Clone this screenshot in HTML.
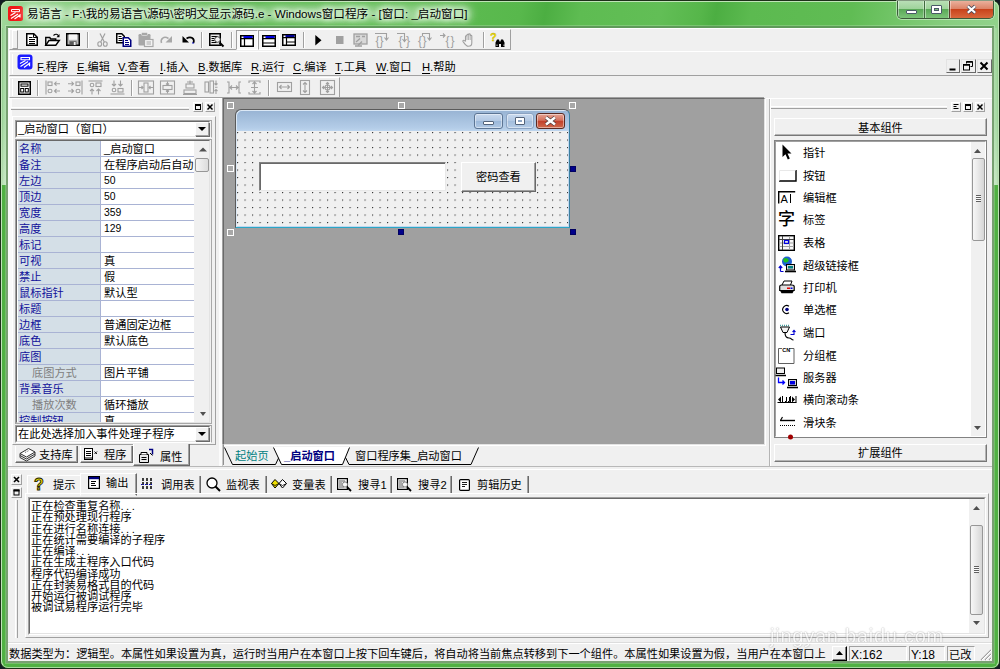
<!DOCTYPE html>
<html lang="zh-CN">
<head>
<meta charset="utf-8">
<title>易语言</title>
<style>
*{box-sizing:border-box;margin:0;padding:0}
html,body{width:1000px;height:669px;overflow:hidden;background:#141c24}
body{font-family:"Liberation Sans","Noto Sans CJK SC",sans-serif;font-size:11.2px;color:#000;position:relative;line-height:12px}
div,span,svg{position:absolute}
svg{overflow:visible}
.t{white-space:nowrap;line-height:12px;font-size:11.2px;height:12px}
.t u{text-decoration:underline;text-underline-offset:2px}
#frame{left:0;top:0;width:1000px;height:669px;border-radius:8px;border:1px solid #1c3018;background:#50b143}
#frame2{left:1px;top:1px;width:998px;height:667px;border-radius:7px;border:1px solid #c0e4b8;border-bottom-color:#a4dc9c}
#tbar{left:1px;top:1px;width:998px;height:27px;border-radius:7px 7px 0 0;background:linear-gradient(100deg,#a4da9e 0,#96d490 2%,#7cc872 8%,#62be56 15%,#58b84c 22%,#4eb044 24%,#5cba50 27%,#60bd54 40%,#58b84c 52%,#4cae42 54.5%,#5ebc52 58%,#62be56 66%,#56b64a 70%,#4cae42 71.5%,#5cba50 75%,#60bc54 85%,#74c66a 90%,#88ce80 95%,#92d28c 100%)}
#lstrip{left:1px;top:28px;width:7px;height:157px;background:linear-gradient(90deg,rgba(0,70,0,.1) 0,rgba(255,255,255,.22) 45%,rgba(255,255,255,0) 70%,rgba(0,70,0,.22) 100%),linear-gradient(180deg,#8fd08a 0,#9ad596 60%,#b8e2b4 100%)}
#rstrip{left:992px;top:28px;width:7px;height:157px;background:linear-gradient(90deg,rgba(0,70,0,.22) 0,rgba(255,255,255,0) 30%,rgba(255,255,255,.22) 55%,rgba(0,70,0,.1) 100%),linear-gradient(180deg,#8fd08a 0,#9ad596 60%,#b8e2b4 100%)}
#client{left:8px;top:28px;width:984px;height:633px;background:#f0f0f0}
#cedge{left:6px;top:26px;width:988px;height:637px;border:2px solid #78a072;border-top-color:#5f9a5a;box-shadow:0 0 0 1px rgba(255,255,255,.2)}
#title{left:27px;top:5px;font-size:11.62px;line-height:17px;height:17px;white-space:nowrap;color:#000;text-shadow:0 0 5px #e4f7e2,0 0 5px #e4f7e2,0 0 8px #e4f7e2,0 0 8px #e4f7e2}
.sunk{border:1px solid;border-color:#a0a0a0 #fff #fff #a0a0a0}
.sunk2{border:1px solid;border-color:#696969 #e3e3e3 #e3e3e3 #696969}
.raise{border:1px solid;border-color:#fff #a0a0a0 #a0a0a0 #fff}
.raise2{border:1px solid;border-color:#e3e3e3 #696969 #696969 #e3e3e3}
.hl{height:2px;border-top:1px solid #a0a0a0;border-bottom:1px solid #fff}
.vl{width:2px;border-left:1px solid #a0a0a0;border-right:1px solid #fff}
.pn{left:1px;width:83px;height:16px;background:#d4dfe7;border-bottom:1px solid #a9b3d4;border-right:1px solid #a9b3d4;color:#10109a;padding:2px 0 0 1px;white-space:nowrap;overflow:hidden;line-height:12px}
.pn.g{color:#808080;padding-left:14px}
.pv{left:84px;width:94px;height:16px;background:#fff;border-bottom:1px solid #a9b3d4;padding:2px 0 0 3px;white-space:nowrap;overflow:hidden;line-height:12px}
.pv.n{font-size:10.4px}
</style>
</head>
<body>
<!-- frame -->
<div id="frame"></div><div id="tbar"></div><div id="lstrip"></div><div id="rstrip"></div><div id="frame2"></div>
<svg style="left:8px;top:6px" width="15" height="15" viewBox="0 0 15 15"><rect x="0" y="0" width="15" height="15" rx="2.5" fill="#f01818"/><path d="M3.5 3.5h8v2.2h-8z" fill="none" stroke="#fff" stroke-width="1"/><path d="M2.5 9.5 7.5 6.5M3 12.5l7-4.5M6.5 13l5.5-4v2.5" fill="none" stroke="#fff" stroke-width="1.2"/></svg>
<div id="glow" style="left:22px;top:6px;width:450px;height:15px;border-radius:8px;background:rgba(255,255,255,.38);filter:blur(5px)"></div>
<div id="title">易语言 - F:\我的易语言\源码\密明文显示源码.e - Windows窗口程序 - [窗口: _启动窗口]</div>
<div id="cedge"></div><div id="client"></div>
<div style="left:897px;top:1px;width:97px;height:18px;border-radius:0 0 5px 5px;border:1px solid #3c5a3a;border-top:0;background:#6ab567;overflow:hidden;box-shadow:0 0 0 1px rgba(220,245,218,.55)">
<div style="left:0;top:0;width:26px;height:17px;background:linear-gradient(180deg,#b9dfb6 0,#9fd39b 45%,#5aa957 50%,#7cc479 100%);box-shadow:inset 1px 0 0 rgba(255,255,255,.45),inset -1px 0 0 rgba(255,255,255,.35)"></div>
<div style="left:26px;top:0;width:1px;height:17px;background:#3f6b3d"></div>
<div style="left:27px;top:0;width:24px;height:17px;background:linear-gradient(180deg,#b9dfb6 0,#9fd39b 45%,#5aa957 50%,#7cc479 100%);box-shadow:inset 1px 0 0 rgba(255,255,255,.45),inset -1px 0 0 rgba(255,255,255,.35)"></div>
<div style="left:51px;top:0;width:1px;height:17px;background:#5a3a30"></div>
<div style="left:52px;top:0;width:44px;height:17px;background:linear-gradient(180deg,#eab09c 0,#dc8468 45%,#c8431c 50%,#d8683c 100%);box-shadow:inset 1px 0 0 rgba(255,255,255,.4),inset -1px 0 0 rgba(255,255,255,.3)"></div>
</div>
<div style="left:906px;top:10px;width:11px;height:4px;background:#fff;border:1px solid #4a5a68;border-radius:1px"></div>
<div style="left:931px;top:5px;width:11px;height:9px;background:#fff;border:1px solid #4a5a68;border-radius:1px"></div>
<div style="left:934px;top:8px;width:5px;height:3px;background:#7fbf7c;border:1px solid #4a5a68"></div>
<svg style="left:966px;top:5px" width="11" height="9" viewBox="0 0 11 9"><path d="M1.800 1.200 9.200 7.800M9.200 1.200 1.800 7.800" stroke="#4a4a58" stroke-width="3.600"/><path d="M1.800 1.200 9.200 7.800M9.200 1.200 1.800 7.800" stroke="#fff" stroke-width="2.200"/></svg>

<!-- toolbars -->
<div style="left:8px;top:28px;width:984px;height:1px;background:#fff"></div>
<div class="raise" style="left:9px;top:29px;width:502px;height:21px"></div>
<div style="left:12px;top:30px;width:6px;height:19px;border:1px solid;border-color:#fff #a0a0a0 #a0a0a0 #fff"></div>
<svg style="left:26px;top:33px" width="12" height="13" viewBox="0 0 12 13"><path d="M.75.75h7l3.5 3.5v8h-10.5z" fill="#fff" stroke="#000" stroke-width="1.5"/><path d="M7.5 1v3.5H11" fill="none" stroke="#000"/><path d="M3 4.5h3.5M3 6.5h6M3 8.5h6M3 10.5h6" stroke="#000" stroke-width="1"/></svg>
<svg style="left:45px;top:33px" width="15" height="13" viewBox="0 0 15 13"><path d="M.75 12V4.5h4l1 1.5h5v2" fill="none" stroke="#000" stroke-width="1.4"/><path d="M.8 12.2 4 7.5h10.3l-3.5 4.7z" fill="#fff" stroke="#000" stroke-width="1.4"/><path d="M8.5 2.5c2-2 4.500-1.500 5 .8" fill="none" stroke="#000" stroke-width="1.100"/><path d="M14.500 1v3.300h-3z" fill="#000"/></svg>
<svg style="left:66px;top:33px" width="14" height="13" viewBox="0 0 14 13"><rect x=".75" y=".75" width="12.500" height="11.500" fill="#b4b4b4" stroke="#000" stroke-width="1.500"/><rect x="3" y="1.500" width="8" height="5.200" fill="#fff"/><path d="M3 3h8M3 5h8" stroke="#e0e0e0" stroke-width=".6"/><rect x="3.500" y="8.300" width="7" height="4" fill="#585858"/><rect x="7.800" y="9" width="1.800" height="3" fill="#f0f0f0"/></svg>
<div class="vl" style="left:87px;top:32px;height:16px"></div>
<svg style="left:97px;top:33px" width="11" height="14" viewBox="0 0 11 14"><path d="M3 .5 7.300 9M8 .5 3.700 9" stroke="#a0a0a0" stroke-width="1.200" fill="none"/><ellipse cx="2.700" cy="11" rx="1.900" ry="2.300" fill="none" stroke="#a0a0a0" stroke-width="1.100"/><ellipse cx="8.300" cy="11" rx="1.900" ry="2.300" fill="none" stroke="#a0a0a0" stroke-width="1.100"/></svg>
<svg style="left:116px;top:33px" width="16" height="14" viewBox="0 0 16 14"><path d="M.75.75h5l2.500 2.500v6.500h-7.500z" fill="#fff" stroke="#000" stroke-width="1.500"/><path d="M2.500 3.500h3M2.500 5.500h4M2.500 7.500h4" stroke="#000"/><path d="M7.250 4.750h5l2.500 2.500v6h-7.500z" fill="#fff" stroke="#000080" stroke-width="1.500"/><path d="M9 7.500h3M9 9.500h4M9 11.500h4" stroke="#000080"/></svg>
<svg style="left:138px;top:32px" width="16" height="15" viewBox="0 0 16 15"><rect x=".5" y="2" width="12" height="11.500" rx="1.200" fill="#a8a8a8"/><rect x="3.500" y=".5" width="6" height="3" rx="1" fill="#a8a8a8" stroke="#f0f0f0" stroke-width=".6"/><rect x="6.500" y="7.500" width="8.500" height="7" fill="#f4f4f4" stroke="#a8a8a8" stroke-width="1.200"/><path d="M8.500 10h4.500M8.500 12h4.500" stroke="#a8a8a8"/></svg>
<svg style="left:160px;top:35px" width="13" height="9" viewBox="0 0 13 9"><path d="M1.500 8C0 3.500 4 .8 8.500 3.500" fill="none" stroke="#a8a8a8" stroke-width="1.500"/><path d="M12 1v6.500H5.500z" fill="#a8a8a8"/></svg>
<svg style="left:181px;top:35px" width="14" height="9" viewBox="0 0 14 9"><path d="M12.500 8C14 3.500 10 .8 5.500 3.500" fill="none" stroke="#000" stroke-width="1.700"/><path d="M1.500 1v6.500H8z" fill="#000"/><path d="M11.500 7.500 12.500 8.500" stroke="#0000c0" stroke-width="1.200"/></svg>
<div class="vl" style="left:201px;top:32px;height:16px"></div>
<svg style="left:209px;top:33px" width="16" height="15" viewBox="0 0 16 15"><rect x=".75" y=".75" width="10.500" height="11.500" fill="#e8e8e8" stroke="#000" stroke-width="1.500"/><path d="M2.500 3.500h6M2.500 5.500h3M2.500 7.500h3M2.500 9.500h5" stroke="#000"/><circle cx="8.500" cy="6.500" r="2.800" fill="#f4f4f4" stroke="#404040" stroke-width="1"/><path d="M10.500 9.500 14.500 13.500" stroke="#000" stroke-width="2"/></svg>
<div class="vl" style="left:231px;top:32px;height:16px"></div>
<div class="sunk" style="left:236px;top:30px;width:22px;height:20px;background:#f8f8f8"></div>
<div class="sunk" style="left:258px;top:30px;width:22px;height:20px;background:#f8f8f8"></div>
<svg style="left:240px;top:35px" width="14" height="12" viewBox="0 0 14 12"><rect x=".75" y=".75" width="12.500" height="10.500" fill="#fff" stroke="#000" stroke-width="1.500"/><rect x="3.500" y="1" width="9" height="2.200" fill="#0000e0"/><path d="M4.500 3.500V11M1 3.700h12" stroke="#000" stroke-width="1.200"/></svg>
<svg style="left:262px;top:35px" width="14" height="12" viewBox="0 0 14 12"><rect x=".75" y=".75" width="12.500" height="10.500" fill="#fff" stroke="#000" stroke-width="1.500"/><rect x="3.500" y="1" width="9" height="2.200" fill="#0000e0"/><path d="M1 3.700h12M1 8h12" stroke="#000" stroke-width="1.200"/></svg>
<svg style="left:282px;top:34px" width="14" height="12" viewBox="0 0 14 12"><rect x=".75" y=".75" width="12.500" height="10.500" fill="#fff" stroke="#000" stroke-width="1.500"/><rect x="3.500" y="1" width="9" height="2.200" fill="#000090"/><path d="M4.500 3.500V11M1 3.700h12M4.500 8h8.500" stroke="#000" stroke-width="1.200"/></svg>
<div class="vl" style="left:303px;top:32px;height:16px"></div>
<svg style="left:315px;top:35px" width="7" height="11" viewBox="0 0 7 11"><path d="M.3 0 6.500 5.300.3 10.600z" fill="#000"/></svg>
<svg style="left:336px;top:36px" width="8" height="8" viewBox="0 0 8 8"><rect width="7.500" height="8" fill="#a0a0a0"/></svg>
<svg style="left:353px;top:33px" width="15" height="14" viewBox="0 0 15 14"><rect x="1" y="1" width="13" height="10" fill="#d8d8d8" stroke="#a0a0a0" stroke-width="1.300"/><path d="M3 3.500h4M9 3.500h3M3 9 7 5.500M5 12.500l4-4" stroke="#a0a0a0" stroke-width="1.300"/><path d="M2 13h7" stroke="#a0a0a0" stroke-width="1.500"/></svg>
<svg style="left:375px;top:32px" width="15" height="15" viewBox="0 0 15 15"><text x="0.5" y="12.5" font-family="Liberation Sans,sans-serif" font-size="12" fill="#a0a0a0">{</text><text x="4.5" y="12.5" font-family="Liberation Sans,sans-serif" font-size="12" fill="#a0a0a0">}</text><path d="M0 1.500h11.500v6M9.500 5.500l2 2.500 2-2.500" fill="none" stroke="#a0a0a0" stroke-width="1.100"/></svg>
<svg style="left:397px;top:32px" width="15" height="15" viewBox="0 0 15 15"><text x="1.5" y="12.5" font-family="Liberation Sans,sans-serif" font-size="12" fill="#a0a0a0">{</text><text x="9" y="12.5" font-family="Liberation Sans,sans-serif" font-size="12" fill="#a0a0a0">}</text><path d="M0 1.500h7.500v8M5.500 7l2 2.500 2-2.500" fill="none" stroke="#a0a0a0" stroke-width="1.100"/></svg>
<svg style="left:418px;top:32px" width="15" height="15" viewBox="0 0 15 15"><text x="0" y="12.5" font-family="Liberation Sans,sans-serif" font-size="12" fill="#a0a0a0">{</text><text x="4.5" y="12.5" font-family="Liberation Sans,sans-serif" font-size="12" fill="#a0a0a0">}</text><path d="M4.500 4V1.500h7v6M9.500 5.500l2 2.500 2-2.500" fill="none" stroke="#a0a0a0" stroke-width="1.100"/></svg>
<svg style="left:440px;top:32px" width="15" height="15" viewBox="0 0 15 15"><text x="5.5" y="12.5" font-family="Liberation Sans,sans-serif" font-size="12" fill="#a0a0a0">{</text><text x="10.5" y="12.5" font-family="Liberation Sans,sans-serif" font-size="12" fill="#a0a0a0">}</text><path d="M0 3.500h5M3 1.500l2 2-2 2" fill="none" stroke="#a0a0a0" stroke-width="1.100"/></svg>
<svg style="left:462px;top:33px" width="14" height="14" viewBox="0 0 14 14"><path d="M3.500 8V3.500c0-1 1.500-1 1.500 0V2c0-1 1.600-1 1.600 0v-.5c0-1 1.600-1 1.600 0V3c0-1 1.600-1 1.600 0v7c0 2-1.500 3.300-3.500 3.300S3.500 12 1 8.500c-.6-1 .8-1.700 1.500-.8z" fill="#f4f4f4" stroke="#a0a0a0" stroke-width="1.100"/><path d="M5 3.500V7M6.600 2V7M8.200 2.500V7" stroke="#a0a0a0" stroke-width=".8"/></svg>
<div class="vl" style="left:483px;top:32px;height:16px"></div>
<svg style="left:489px;top:32px" width="18" height="16" viewBox="0 0 18 16"><text x="1" y="9" font-family="Liberation Sans,sans-serif" font-weight="bold" font-size="11" fill="#f0e000" stroke="#b0a000" stroke-width=".3">?</text><path d="M6.500 15v-4.500l1.500-3h2l.5 2h1l.5-2h2l1.500 3V15h-3.500v-3h-2v3z" fill="#000"/><path d="M8 12.500v1.500M15 12.500v1.500" stroke="#fff" stroke-width=".8"/></svg>
<div class="raise" style="left:9px;top:51px;width:983px;height:25px;border-right:0"></div>
<div style="left:12px;top:54px;width:1px;height:20px;background:#fff"></div>
<svg style="left:17px;top:54px" width="16" height="16" viewBox="0 0 16 16"><rect x=".5" y=".5" width="15" height="15" rx="3" fill="#1a1aff"/><path d="M4 3.500h8.500v2.300H4z" fill="none" stroke="#fff" stroke-width="1.100"/><path d="M3 9.500 8.500 6.500M3.500 12.500l7.500-5M7 13.500l5.500-4.200v3" fill="none" stroke="#fff" stroke-width="1.300"/></svg>
<div class="t" style="left:37px;top:61px"><u>F</u>.程序</div>
<div class="t" style="left:77px;top:61px"><u>E</u>.编辑</div>
<div class="t" style="left:118px;top:61px"><u>V</u>.查看</div>
<div class="t" style="left:160px;top:61px"><u>I</u>.插入</div>
<div class="t" style="left:198px;top:61px"><u>B</u>.数据库</div>
<div class="t" style="left:251px;top:61px"><u>R</u>.运行</div>
<div class="t" style="left:293px;top:61px"><u>C</u>.编译</div>
<div class="t" style="left:335px;top:61px"><u>T</u>.工具</div>
<div class="t" style="left:376px;top:61px"><u>W</u>.窗口</div>
<div class="t" style="left:422px;top:61px"><u>H</u>.帮助</div>
<div class="raise2" style="left:946px;top:59px;width:14px;height:14px;background:#f0f0f0"></div>
<svg style="left:947px;top:60px" width="12" height="12" viewBox="0 0 12 12"><path d="M2.500 9.500h6" stroke="#000" stroke-width="2"/></svg>
<div class="raise2" style="left:961px;top:59px;width:15px;height:14px;background:#f0f0f0"></div>
<svg style="left:962px;top:60px" width="12" height="12" viewBox="0 0 12 12"><path d="M4.500 3.500V1.500h6v5h-2" fill="none" stroke="#000" stroke-width="1"/><path d="M4.500 2h6" stroke="#000" stroke-width="1.500"/><rect x="1.500" y="4.500" width="6" height="5.500" fill="none" stroke="#000"/><path d="M1.500 5h6" stroke="#000" stroke-width="1.500"/></svg>
<div class="raise2" style="left:977px;top:59px;width:15px;height:14px;background:#f0f0f0"></div>
<svg style="left:978px;top:60px" width="12" height="12" viewBox="0 0 12 12"><path d="M2.500 2.500 9.500 9.500M9.500 2.500 2.500 9.500" stroke="#000" stroke-width="2"/></svg>
<div class="raise" style="left:9px;top:77px;width:331px;height:21px"></div>
<div style="left:12px;top:79px;width:1px;height:17px;background:#fff"></div>
<svg style="left:18px;top:81px" width="13" height="14" viewBox="0 0 13 14"><rect x=".75" y=".75" width="11.500" height="12.500" fill="#fff" stroke="#000" stroke-width="1.500"/><rect x="3" y="3" width="7" height="2.200" fill="none" stroke="#000" stroke-width="1"/><rect x="2.700" y="7.500" width="3" height="3.500" fill="none" stroke="#000"/><rect x="7.300" y="7.500" width="3" height="3.500" fill="none" stroke="#000"/></svg>
<div class="vl" style="left:37px;top:80px;height:16px"></div>
<svg style="left:45px;top:80px" width="16" height="15" viewBox="0 0 16 15"><g fill="none" stroke="#a0a0a0" stroke-width="1.100"><path d="M1 .5v14"/><rect x="3" y="2" width="4" height="3.500"/><ellipse cx="5" cy="11" rx="2" ry="1.800"/><path d="M15 3.700H9.500M11.500 1.700 9.500 3.700l2 2M15 11H9.500M11.500 9 9.500 11l2 2"/></g></svg>
<svg style="left:67px;top:80px" width="16" height="15" viewBox="0 0 16 15"><g fill="none" stroke="#a0a0a0" stroke-width="1.100"><path d="M15 .5v14"/><rect x="9" y="2" width="4" height="3.500"/><ellipse cx="11" cy="11" rx="2" ry="1.800"/><path d="M1 3.700h5.500M4.500 1.700l2 2-2 2M1 11h5.500M4.500 9l2 2-2 2"/></g></svg>
<svg style="left:88px;top:80px" width="15" height="15" viewBox="0 0 15 15"><g fill="none" stroke="#a0a0a0" stroke-width="1.100"><path d="M.5 1h14"/><ellipse cx="4" cy="5" rx="1.800" ry="1.800"/><rect x="8" y="3" width="5" height="3.500"/><path d="M4 14.500V9M2 11l2-2 2 2M10.500 14.500V9M8.500 11l2-2 2 2"/></g></svg>
<svg style="left:110px;top:80px" width="15" height="15" viewBox="0 0 15 15"><g fill="none" stroke="#a0a0a0" stroke-width="1.100"><path d="M.5 14h14"/><ellipse cx="4" cy="10" rx="1.800" ry="1.800"/><rect x="8" y="8.500" width="5" height="3.500"/><path d="M4 .5V6M2 4l2 2 2-2M10.500 .5V6M8.500 4l2 2 2-2"/></g></svg>
<div class="vl" style="left:131px;top:80px;height:16px"></div>
<svg style="left:138px;top:80px" width="16" height="15" viewBox="0 0 16 15"><g fill="none" stroke="#a0a0a0" stroke-width="1.100"><rect x=".5" y="1" width="15" height="13"/><rect x="6" y="3" width="4" height="9"/><path d="M1 7.500h4M3.500 6 5 7.500 3.500 9M15 7.500h-4M12.500 6 11 7.500 12.500 9"/></g></svg>
<svg style="left:160px;top:80px" width="15" height="15" viewBox="0 0 15 15"><g fill="none" stroke="#a0a0a0" stroke-width="1.100"><rect x=".5" y="1" width="14" height="13"/><rect x="3" y="5.500" width="9" height="4"/><path d="M7.500 1.500V5M6 3.500 7.500 5 9 3.500M7.500 13.500V10M6 11.500 7.500 10 9 11.500"/></g></svg>
<svg style="left:183px;top:80px" width="15" height="15" viewBox="0 0 15 15"><g fill="none" stroke="#a0a0a0" stroke-width="1.100"><rect x="3" y="4" width="8" height="4"/><rect x="1" y="10" width="12" height="3.500"/><path d="M4 2h6M7 .5V4M0 14.500h14"/></g></svg>
<svg style="left:204px;top:80px" width="14" height="15" viewBox="0 0 14 15"><g fill="none" stroke="#a0a0a0" stroke-width="1.100"><rect x="1" y="2" width="3.500" height="10"/><rect x="6" y="1" width="3.500" height="12"/><path d="M12 .5V5M10.500 3.500 12 5l1.500-1.500M12 14V9.500M10.500 11 12 9.500l1.500 1.500M11 7.200h2.500"/></g></svg>
<svg style="left:226px;top:81px" width="16" height="13" viewBox="0 0 16 13"><g fill="none" stroke="#a0a0a0" stroke-width="1.100"><path d="M1 1h2v11H1M15 1h-2v11h2M4 6.500h8M6 4.500 4 6.500l2 2M10 4.500l2 2-2 2"/></g></svg>
<svg style="left:248px;top:80px" width="13" height="15" viewBox="0 0 13 15"><g fill="none" stroke="#a0a0a0" stroke-width="1.100"><path d="M1 3V1h11v2M1 12v2h11v-2M6.500 2v11M4.500 4l2-2 2 2M4.500 11l2 2 2-2M3 7.500h7"/></g></svg>
<div class="vl" style="left:268px;top:80px;height:16px"></div>
<svg style="left:277px;top:82px" width="15" height="10" viewBox="0 0 15 10"><g fill="none" stroke="#a0a0a0" stroke-width="1.100"><rect x=".5" y=".5" width="14" height="9"/><path d="M2.500 5h10M4.500 3l-2 2 2 2M10.500 3l2 2-2 2"/></g></svg>
<svg style="left:300px;top:80px" width="10" height="15" viewBox="0 0 10 15"><g fill="none" stroke="#a0a0a0" stroke-width="1.100"><rect x=".5" y=".5" width="9" height="14"/><path d="M5 2.500v10M3 4.500l2-2 2 2M3 10.500l2 2 2-2"/></g></svg>
<svg style="left:320px;top:80px" width="15" height="15" viewBox="0 0 15 15"><g fill="none" stroke="#a0a0a0" stroke-width="1.100"><rect x=".5" y=".5" width="14" height="14"/><path d="M2.500 7.500h10M7.500 2.500v10M4 6 2.500 7.500 4 9M11 6l1.500 1.500L11 9M6 4l1.500-1.500L9 4M6 11l1.500 1.500L9 11"/><circle cx="7.500" cy="7.500" r="2.500"/></g></svg>

<!-- left -->
<div style="left:8px;top:98px;width:215px;height:1px;background:#fff"></div>
<div style="left:8px;top:99px;width:4px;height:367px;background:#fafafa"></div>
<div class="hl" style="left:11px;top:107px;width:178px;height:3px;border-top:1px solid #fff;border-bottom:1px solid #a0a0a0;background:#f0f0f0"></div>
<div class="raise" style="left:193px;top:102px;width:10px;height:10px;background:#f0f0f0"></div>
<svg style="left:194px;top:103px" width="8" height="8" viewBox="0 0 8 8"><rect x="1.500" y="1.500" width="5" height="5" fill="none" stroke="#000"/><path d="M1 2h6" stroke="#000" stroke-width="2"/></svg>
<div class="raise" style="left:205px;top:102px;width:10px;height:10px;background:#f0f0f0"></div>
<svg style="left:206px;top:103px" width="8" height="8" viewBox="0 0 8 8"><path d="M1.500 1.500 6.500 6.500M6.500 1.500 1.500 6.500" stroke="#000" stroke-width="1.500"/></svg>
<div class="sunk" style="left:12px;top:116px;width:204px;height:329px;border-left-color:#fff;border-top-color:#fff;border-right-color:#a0a0a0;border-bottom-color:#a0a0a0"></div>
<div class="sunk" style="left:15px;top:120px;width:197px;height:18px;border-right-color:#a8a8a8"></div>
<div class="sunk2" style="left:16px;top:121px;width:194px;height:16px;background:#fff"></div>
<div class="t" style="left:18px;top:123px">_启动窗口（窗口）</div>
<div class="raise" style="left:195px;top:122px;width:14px;height:14px;background:#f0f0f0;box-shadow:1px 1px 0 #696969"></div>
<svg style="left:198px;top:127px" width="8" height="4" viewBox="0 0 8 4"><path d="M0 0h8L4 4z" fill="#000"/></svg>
<div class="sunk" style="left:15px;top:139px;width:197px;height:285px;border-right-color:#a8a8a8;border-bottom-color:#a8a8a8"></div>
<div class="sunk2" style="left:16px;top:140px;width:194px;height:283px;background:#fff;overflow:hidden" id="pg">
<div class="pn" style="top:0px">名称</div><div class="pv" style="top:0px">_启动窗口</div>
<div class="pn" style="top:16px">备注</div><div class="pv" style="top:16px">在程序启动后自动</div>
<div class="pn" style="top:32px">左边</div><div class="pv n" style="top:32px">50</div>
<div class="pn" style="top:48px">顶边</div><div class="pv n" style="top:48px">50</div>
<div class="pn" style="top:64px">宽度</div><div class="pv n" style="top:64px">359</div>
<div class="pn" style="top:80px">高度</div><div class="pv n" style="top:80px">129</div>
<div class="pn" style="top:96px">标记</div><div class="pv" style="top:96px"></div>
<div class="pn" style="top:112px">可视</div><div class="pv" style="top:112px">真</div>
<div class="pn" style="top:128px">禁止</div><div class="pv" style="top:128px">假</div>
<div class="pn" style="top:144px">鼠标指针</div><div class="pv" style="top:144px">默认型</div>
<div class="pn" style="top:160px">标题</div><div class="pv" style="top:160px"></div>
<div class="pn" style="top:176px">边框</div><div class="pv" style="top:176px">普通固定边框</div>
<div class="pn" style="top:192px">底色</div><div class="pv" style="top:192px">默认底色</div>
<div class="pn" style="top:208px">底图</div><div class="pv" style="top:208px"></div>
<div class="pn g" style="top:224px">底图方式</div><div class="pv" style="top:224px">图片平铺</div>
<div class="pn" style="top:240px">背景音乐</div><div class="pv" style="top:240px"></div>
<div class="pn g" style="top:256px">播放次数</div><div class="pv" style="top:256px">循环播放</div>
<div class="pn" style="top:272px">控制按钮</div><div class="pv" style="top:272px">真</div>
<div style="left:177px;top:0;width:17px;height:282px;background:#f0f0f0"></div>
<svg style="left:182px;top:6px" width="8" height="5" viewBox="0 0 8 5"><path d="M0 4.500 4 .5 8 4.500z" fill="#505050"/></svg>
<svg style="left:183px;top:271px" width="6" height="4" viewBox="0 0 6 4"><path d="M0 0h6L3 4z" fill="#505050"/></svg>
<div style="left:178px;top:17px;width:14px;height:14px;border:1px solid #979797;border-radius:2px;background:linear-gradient(90deg,#f5f5f5,#dcdcdc)"></div>
</div>
<div class="sunk" style="left:15px;top:425px;width:197px;height:18px;border-right-color:#a8a8a8"></div>
<div class="sunk2" style="left:16px;top:426px;width:194px;height:16px;background:#fff"></div>
<div class="t" style="left:18px;top:428px">在此处选择加入事件处理子程序</div>
<div class="raise" style="left:195px;top:427px;width:14px;height:14px;background:#f0f0f0;box-shadow:1px 1px 0 #696969"></div>
<svg style="left:198px;top:432px" width="8" height="4" viewBox="0 0 8 4"><path d="M0 0h8L4 4z" fill="#000"/></svg>
<div style="left:15px;top:446px;width:63px;height:17px;border:1px solid;border-color:#fff #696969 #696969 #fff;border-top:0;box-shadow:inset -1px -1px 0 #a0a0a0"></div>
<div style="left:80px;top:446px;width:53px;height:17px;border:1px solid;border-color:#fff #696969 #696969 #fff;border-top:0;box-shadow:inset -1px -1px 0 #a0a0a0"></div>
<div style="left:133px;top:444px;width:57px;height:22px;background:#f0f0f0;border:1px solid;border-color:#fff #696969 #696969 #fff;border-top:0;box-shadow:inset -1px -1px 0 #a0a0a0"></div>
<svg style="left:19px;top:447px" width="17" height="14" viewBox="0 0 17 14"><path d="M1 6.500 9.500 1.500l6.500 3.500-8.500 5z" fill="#fff" stroke="#303030" stroke-width="1"/><path d="M1 8.500 7.500 12l8.500-5M1 10.500 7.500 14l8.500-5M1 6.500v4M16 5v4" fill="none" stroke="#303030"/><path d="M6 5.500l4-2" stroke="#606060" stroke-dasharray="1 1"/></svg>
<div class="t" style="left:39px;top:449px">支持库</div>
<svg style="left:84px;top:448px" width="14" height="12" viewBox="0 0 14 12"><rect x=".5" y=".5" width="8" height="11" fill="#fff" stroke="#000"/><path d="M2 3.500h5M2 5.500h5M2 7.500h5M.5 10h8" stroke="#000"/><path d="M10.500 3.500l2.500 2.500M13 3.500 10.500 6" stroke="#000" stroke-width=".9"/></svg>
<div class="t" style="left:104px;top:449px">程序</div>
<svg style="left:138px;top:448px" width="16" height="15" viewBox="0 0 16 15"><path d="M1.500 14.500v-8h9v8z" fill="#e8e8e8" stroke="#000"/><path d="M3 6.500v-2h6v2" fill="#fff" stroke="#000"/><path d="M3.500 9.500h5M3.500 11.500h5" stroke="#000"/><path d="M11 1.500h3.500v5" fill="none" stroke="#000080" stroke-width="1.500"/><path d="M12 5l2.500 2.500" stroke="#000"/></svg>
<div class="t" style="left:160px;top:451px">属性</div>
<div style="left:219px;top:99px;width:3px;height:367px;background:#fbfbfb"></div>
<div style="left:222px;top:99px;width:1px;height:367px;background:#c8c8c8"></div>
<div style="left:8px;top:466px;width:984px;height:1px;background:#b8b8b8"></div>
<div style="left:8px;top:469px;width:984px;height:1px;background:#fff"></div>

<!-- center -->
<div style="left:223px;top:98px;width:542px;height:347px;background:#a0a0a0;border:1px solid;border-color:#696969 #e3e3e3 #e3e3e3 #696969;box-shadow:-1px -1px 0 #a0a0a0,1px 1px 0 #fff"></div>
<div style="left:235px;top:109px;width:335px;height:119px;border-radius:6px 6px 0 0;background:linear-gradient(180deg,#97b3d3 0,#b4cde8 18px,#c2d8ef 22px,#c2d8ef 100%);border:1px solid #5a5a5a;border-bottom-color:#2aa6c6;border-right-color:#3c7f9f;box-shadow:inset 1px 1px 0 #dbe8f5"></div>
<div style="left:237px;top:131px;width:331px;height:95px;background-color:#f0f0f0;background-image:radial-gradient(circle at .5px .5px,#303030 0,#303030 .55px,rgba(48,48,48,0) 1px);background-size:7.5px 7.5px;background-position:0 1px"></div>
<div style="left:474px;top:113px;width:29px;height:16px;border-radius:3px;border:1px solid #5c7594;background:linear-gradient(180deg,#c9daee 0,#b3c9e4 48%,#9bb8da 52%,#b0c8e4 100%);box-shadow:inset 0 0 0 1px rgba(255,255,255,.45)"></div>
<div style="left:483px;top:121px;width:11px;height:4px;background:#fff;border:1px solid #53637a;border-radius:1px"></div>
<div style="left:506px;top:113px;width:28px;height:16px;border-radius:3px;border:1px solid #8ba3c2;background:linear-gradient(180deg,#c9daee 0,#b3c9e4 48%,#a3bedd 52%,#b4cbe6 100%);box-shadow:inset 0 0 0 1px rgba(255,255,255,.45)"></div>
<div style="left:515px;top:117px;width:10px;height:8px;background:#fff;border:1px solid #53637a;border-radius:1px"></div><div style="left:518px;top:120px;width:4px;height:2px;background:#8fa6c4;border:0"></div>
<div style="left:536px;top:113px;width:29px;height:16px;border-radius:3px;border:1px solid #5a2a22;background:linear-gradient(180deg,#e5a595 0,#d4705c 45%,#c2412c 52%,#d06a4c 100%);box-shadow:inset 0 0 0 1px rgba(255,255,255,.45)"></div>
<svg style="left:544px;top:116px" width="13" height="10" viewBox="0 0 13 10"><path d="M2 1.500 11 8.500M11 1.500 2 8.500" stroke="#4a3a3a" stroke-width="4"/><path d="M2 1.500 11 8.500M11 1.500 2 8.500" stroke="#fff" stroke-width="2.600"/></svg>
<div style="left:259px;top:162px;width:187px;height:29px;background:#fff;border:1px solid;border-color:#828282 #e8e8e8 #e8e8e8 #828282;box-shadow:inset 1px 1px 0 #696969"></div>
<div style="left:461px;top:162px;width:75px;height:30px;background:#f0f0f0;border:1px solid;border-color:#fff #696969 #696969 #fff;box-shadow:inset -1px -1px 0 #a0a0a0"></div>
<div class="t" style="left:476px;top:171px">密码查看</div>
<div style="left:227px;top:102px;width:7px;height:7px;border:1px solid #fff;background:#a8a8a8"></div>
<div style="left:398px;top:102px;width:7px;height:7px;border:1px solid #fff;background:#a8a8a8"></div>
<div style="left:569px;top:102px;width:7px;height:7px;border:1px solid #fff;background:#a8a8a8"></div>
<div style="left:227px;top:165px;width:7px;height:7px;border:1px solid #fff;background:#a8a8a8"></div>
<div style="left:227px;top:229px;width:7px;height:7px;border:1px solid #fff;background:#a8a8a8"></div>
<div style="left:570px;top:166px;width:6px;height:6px;background:#00008b;border:1px solid #000060"></div>
<div style="left:398px;top:229px;width:6px;height:6px;background:#00008b;border:1px solid #000060"></div>
<div style="left:570px;top:229px;width:6px;height:6px;background:#00008b;border:1px solid #000060"></div>
<div style="left:223px;top:445px;width:1px;height:20px;background:#909090"></div>
<svg style="left:0;top:0" width="1000" height="669" viewBox="0 0 1000 669"><path d="M224.500 447.500 232.500 464.500H275.500L280 455" fill="none" stroke="#000" stroke-width="1"/><path d="M345 456.500 349 464.500H471L478.500 447.500" fill="none" stroke="#000"/><path d="M273.500 447 281.500 464.500H342.500L349.500 447z" fill="#fff" stroke="none"/><path d="M273.500 447.500 281.500 464.500H342.500L349.500 447.500" fill="none" stroke="#000"/></svg>
<div class="t" style="left:235px;top:450px;color:#008080">起始页</div>
<div class="t" style="left:284px;top:450px;color:#000080;font-weight:bold">_启动窗口</div>
<div class="t" style="left:355px;top:450px">窗口程序集_启动窗口</div>

<!-- right -->
<div style="left:766px;top:98px;width:226px;height:1px;background:#fff"></div>
<div style="left:770px;top:99px;width:1px;height:367px;background:#fff"></div>
<div style="left:769px;top:99px;width:1px;height:367px;background:#b4b4b4"></div>
<div style="left:771px;top:106px;width:176px;height:3px;border-top:1px solid #fff;border-bottom:1px solid #a0a0a0"></div>
<div class="raise" style="left:951px;top:102px;width:10px;height:10px;background:#f0f0f0"></div>
<svg style="left:952px;top:103px" width="8" height="8" viewBox="0 0 8 8"><path d="M1.500 1.500h5M1.500 3.500h3M1.500 5.500h5" stroke="#000" stroke-width="1"/></svg>
<div class="raise" style="left:963px;top:102px;width:10px;height:10px;background:#f0f0f0"></div>
<svg style="left:964px;top:103px" width="8" height="8" viewBox="0 0 8 8"><rect x="1.500" y="1.500" width="5" height="5" fill="none" stroke="#000"/><path d="M1 2h6" stroke="#000" stroke-width="2"/></svg>
<div class="raise" style="left:975px;top:102px;width:10px;height:10px;background:#f0f0f0"></div>
<svg style="left:976px;top:103px" width="8" height="8" viewBox="0 0 8 8"><path d="M1.500 1.500 6.500 6.500M6.500 1.500 1.500 6.500" stroke="#000" stroke-width="1.500"/></svg>
<div style="left:774px;top:118px;width:213px;height:18px;background:#f0f0f0;border:1px solid;border-color:#fff #777 #777 #fff;box-shadow:inset -1px -1px 0 #b4b4b4"></div>
<div class="t" style="left:858px;top:122px">基本组件</div>
<div style="left:774px;top:140px;width:213px;height:298px;border:1px solid #828282"></div>
<div style="left:775px;top:141px;width:211px;height:296px;background:#fff;overflow:hidden;border:1px solid;border-color:#a0a0a0 #fff #fff #a0a0a0">
<div style="left:195px;top:0;width:14px;height:294px;background:#f0f0f0"></div>
<svg style="left:198px;top:7px" width="7" height="4" viewBox="0 0 7 4"><path d="M0 4 3.500 0 7 4z" fill="#505050"/></svg>
<svg style="left:198px;top:284px" width="7" height="4" viewBox="0 0 7 4"><path d="M0 0h7L3.500 4z" fill="#505050"/></svg>
<div style="left:196px;top:16px;width:13px;height:83px;border:1px solid #979797;border-radius:2px;background:linear-gradient(90deg,#f7f7f7 0,#e9e9e9 45%,#d6d6d6 100%)"></div>
<div style="left:200px;top:53px;width:5px;height:7px;background:repeating-linear-gradient(180deg,#606060 0,#606060 1px,rgba(255,255,255,.8) 1px,rgba(255,255,255,.8) 2px)"></div>
</div>
<div class="t" style="left:803px;top:147px">指针</div>
<div class="t" style="left:803px;top:170px">按钮</div>
<div class="t" style="left:803px;top:192px">编辑框</div>
<div class="t" style="left:803px;top:214px">标签</div>
<div class="t" style="left:803px;top:237px">表格</div>
<div class="t" style="left:803px;top:260px">超级链接框</div>
<div class="t" style="left:803px;top:282px">打印机</div>
<div class="t" style="left:803px;top:304px">单选框</div>
<div class="t" style="left:803px;top:327px">端口</div>
<div class="t" style="left:803px;top:350px">分组框</div>
<div class="t" style="left:803px;top:372px">服务器</div>
<div class="t" style="left:803px;top:394px">横向滚动条</div>
<div class="t" style="left:803px;top:417px">滑块条</div>
<svg style="left:782px;top:144px" width="10" height="16" viewBox="0 0 10 16"><path d="M.5.5v12.500l3-2.800 2.300 5.300 2-1-2.300-5h4z" fill="#000"/></svg>
<svg style="left:779px;top:170px" width="18" height="12" viewBox="0 0 18 12"><path d="M0 11h17V0" fill="none" stroke="#000" stroke-width="1.400"/><path d="M.5 10.500V.5h16" fill="none" stroke="#e8e8e8" stroke-width="1"/></svg>
<svg style="left:778px;top:191px" width="18" height="13" viewBox="0 0 18 13"><path d="M.7 12.500V.7h16.500" fill="none" stroke="#000" stroke-width="1.400"/><text x="2.500" y="11.500" font-family="Liberation Sans,sans-serif" font-size="11" fill="#000">A</text><path d="M12.500 3v9" stroke="#000" stroke-width="1"/></svg>
<div style="left:778px;top:211px;font-size:17px;line-height:18px;height:18px;font-weight:500;white-space:nowrap">字</div>
<svg style="left:778px;top:235px" width="17" height="16" viewBox="0 0 17 16"><rect x=".7" y=".7" width="15.600" height="14.600" fill="#f8f8f8" stroke="#000" stroke-width="1.400"/><path d="M1 4.500h15M1 8h15M1 11.500h15M4.500 1v14M11.500 1v14" stroke="#a0a0a0" stroke-width="1"/><path d="M4.500 1v14M1 4.500h15" stroke="#404040"/><rect x="6.500" y="5.500" width="4" height="3" fill="none" stroke="#0000e0" stroke-width="1.200"/></svg>
<svg style="left:778px;top:256px" width="19" height="17" viewBox="0 0 19 17"><circle cx="9" cy="5.500" r="5" fill="#2060d0"/><path d="M5.500 3c2-2 4-1 5 .5s-1 3-3 3-2.500-2-2-3.500zM9 8.500c1.500-1 3.500 0 3 1" fill="#20c020"/><rect x="8.500" y="8.500" width="8" height="5.500" fill="#d8d8d8" stroke="#000"/><rect x="10" y="10" width="5" height="2.500" fill="#008080"/><path d="M7 15.500h11" stroke="#000" stroke-width="1.600"/><path d="M2.500 15.500v-5M.8 12l1.700-2 1.700 2M2.500 15.500h3" fill="none" stroke="#0000d0" stroke-width="1.200"/></svg>
<svg style="left:779px;top:280px" width="16" height="14" viewBox="0 0 16 14"><path d="M3 5 5 1h8l-1.500 4" fill="#fff" stroke="#000"/><path d="M.7 6.500c0-1 1-1.500 2-1.500h10c1.500 0 2.500.5 2.500 1.500v4H.7z" fill="#e0e0e0" stroke="#000" stroke-width="1.200"/><path d="M1 10.500h14l-1.500 2.800H2.500z" fill="#000"/><rect x="8" y="7.500" width="3" height="1.500" fill="#e00000"/><rect x="11.500" y="7.500" width="2" height="1.500" fill="#0000e0"/></svg>
<svg style="left:782px;top:305px" width="9" height="9" viewBox="0 0 9 9"><path d="M7 1.200A4 4 0 1 0 7 7.800" fill="none" stroke="#000" stroke-width="1.100"/><circle cx="5" cy="4.500" r="1.800" fill="#000080"/></svg>
<svg style="left:779px;top:324px" width="17" height="17" viewBox="0 0 17 17"><path d="M1 1.500h10" stroke="#40a0a0" stroke-width="1.500" stroke-dasharray="1 1"/><path d="M1.500 3h9L8 8.500H4z" fill="#f4f4f4" stroke="#000"/><path d="M6 8.500c0 4 1 5.500 4 5.500s2 2 4.500 2" fill="none" stroke="#000" stroke-width="1.200"/><path d="M11.500 10.500h3.500V6.500M13.500 8l1.500-1.700 1.500 1.700" fill="none" stroke="#0000d0" stroke-width="1.100"/></svg>
<svg style="left:778px;top:347px" width="17" height="17" viewBox="0 0 17 17"><path d="M4 1.500H.5v15h15.500v-15H11" fill="#fff" stroke="#606060" stroke-width="1"/><text x="4.300" y="4.500" font-family="Liberation Sans,sans-serif" font-size="5.500" font-weight="bold" fill="#000">CN</text></svg>
<svg style="left:775px;top:367px" width="24" height="22" viewBox="0 0 24 22"><rect x="1.500" y="1" width="8" height="5.500" fill="#f0f0f0" stroke="#000"/><path d="M.5 8.500h10.500" stroke="#000" stroke-width="1.500"/><rect x="13.500" y="12.500" width="8" height="6" fill="#d0d0d0" stroke="#000"/><rect x="15" y="14" width="5" height="3.500" fill="#0000e0"/><path d="M12 20.500h11" stroke="#000" stroke-width="1.600"/><path d="M3.500 10.500v5h6M7.500 13.500l2 2-2 2" fill="none" stroke="#0000ff" stroke-width="1.300"/></svg>
<svg style="left:777px;top:395px" width="20" height="8" viewBox="0 0 20 8"><path d="M.5 7.500h19" stroke="#000"/><path d="M4 1.500 1 4.500l3 3zM15 1.500l3 3-3 3z" fill="#000"/><path d="M5.500 1v6.500M13.500 1v6.500M19 1v6.500M8 6.500h1.500V2M11 6.500h1.500V2" fill="none" stroke="#000"/></svg>
<svg style="left:779px;top:416px" width="17" height="11" viewBox="0 0 17 11"><path d="M1 4.500h15" stroke="#000" stroke-width="1.400"/><path d="M3.500 1 1.500 4.500" stroke="#000" stroke-width="1.200"/><path d="M1 9.500h15" stroke="#000" stroke-dasharray="1 1"/></svg>
<svg style="left:788px;top:434px" width="5" height="3" viewBox="0 0 5 3"><circle cx="2.500" cy="3" r="2.500" fill="#a00000"/></svg>
<div style="left:774px;top:444px;width:213px;height:18px;background:#f0f0f0;border:1px solid;border-color:#fff #777 #777 #fff;box-shadow:inset -1px -1px 0 #b4b4b4"></div>
<div class="t" style="left:858px;top:447px">扩展组件</div>

<!-- bottom -->
<div class="raise" style="left:11px;top:474px;width:11px;height:11px;background:#f0f0f0"></div>
<svg style="left:12px;top:475px" width="9" height="9" viewBox="0 0 9 9"><path d="M2 2 7 7M7 2 2 7" stroke="#000" stroke-width="1.600"/></svg>
<div class="raise" style="left:11px;top:487px;width:11px;height:11px;background:#f0f0f0"></div>
<svg style="left:12px;top:488px" width="9" height="9" viewBox="0 0 9 9"><rect x="2" y="2" width="5" height="5" fill="none" stroke="#000"/><path d="M1.500 2.500h6" stroke="#000" stroke-width="2"/></svg>
<div style="left:15px;top:500px;width:3px;height:138px;border-left:1px solid #fff;border-right:1px solid #a0a0a0"></div>
<div style="left:27px;top:475px;width:53px;height:19px;border-left:1px solid #fff;border-top:1px solid #fff"></div>
<div style="left:80px;top:473px;width:57px;height:23px;background:#f0f0f0;border:1px solid;border-color:#fff #696969 #f0f0f0 #fff;box-shadow:inset -1px 0 0 #a0a0a0"></div>
<div style="left:199px;top:476px;width:2px;height:17px;border-left:1px solid #a0a0a0;border-right:1px solid #696969"></div>
<div style="left:265px;top:476px;width:2px;height:17px;border-left:1px solid #a0a0a0;border-right:1px solid #696969"></div>
<div style="left:330px;top:476px;width:2px;height:17px;border-left:1px solid #a0a0a0;border-right:1px solid #696969"></div>
<div style="left:390px;top:476px;width:2px;height:17px;border-left:1px solid #a0a0a0;border-right:1px solid #696969"></div>
<div style="left:450px;top:476px;width:2px;height:17px;border-left:1px solid #a0a0a0;border-right:1px solid #696969"></div>
<div style="left:527px;top:476px;width:2px;height:17px;border-left:1px solid #a0a0a0;border-right:1px solid #696969"></div>
<svg style="left:34px;top:477px" width="12" height="15" viewBox="0 0 12 15"><text x="0" y="13" font-family="Liberation Sans,sans-serif" font-size="16" font-weight="bold" fill="#f0e000" stroke="#202000" stroke-width=".9">?</text></svg>
<div class="t" style="left:53px;top:479px">提示</div>
<svg style="left:88px;top:476px" width="12" height="13" viewBox="0 0 12 13"><rect x=".6" y=".6" width="10.800" height="11.800" fill="#fff" stroke="#000" stroke-width="1.200"/><rect x="1" y="1" width="10" height="2.200" fill="#000080"/><path d="M3 5.500h5M3 7.500h4M3 9.500h5" stroke="#000"/></svg>
<div class="t" style="left:106px;top:477px">输出</div>
<svg style="left:141px;top:478px" width="13" height="13" viewBox="0 0 13 13"><path d="M2 0v12M6 0v12M10 0v12" stroke="#000" stroke-width="1.500" stroke-dasharray="3 1"/><path d="M0 6.500h12" stroke="#0000c0" stroke-dasharray="1 1"/></svg>
<div class="t" style="left:161px;top:479px">调用表</div>
<svg style="left:206px;top:477px" width="15" height="15" viewBox="0 0 15 15"><circle cx="6" cy="6" r="5" fill="#fff" stroke="#000" stroke-width="1.300"/><path d="M9.500 9.500 14 14" stroke="#000" stroke-width="2"/></svg>
<div class="t" style="left:226px;top:479px">监视表</div>
<svg style="left:271px;top:479px" width="16" height="11" viewBox="0 0 16 11"><path d="M4 .5 8 4.500 4 9 .5 4.500z" fill="#f0e000" stroke="#000"/><path d="M11.500 .5 15.500 4.500 11.500 9 8 4.500z" fill="#fff" stroke="#000"/><path d="M.5 4.500 4 6.500 8 4.500M8 4.500l3.500 2 4-2" fill="none" stroke="#000" stroke-width=".8"/></svg>
<div class="t" style="left:292px;top:479px">变量表</div>
<svg style="left:337px;top:478px" width="15" height="14" viewBox="0 0 15 14"><rect x=".6" y=".6" width="9.800" height="10.800" fill="#f4f4f4" stroke="#000" stroke-width="1.200"/><path d="M2 3h6M2 5h3M2 7h3M2 9h5" stroke="#404040" stroke-width=".8"/><circle cx="8" cy="6.500" r="2.600" fill="#f8f8f8" stroke="#606060" stroke-width=".8"/><path d="M10 9 14 13" stroke="#000" stroke-width="1.800"/></svg>
<div class="t" style="left:358px;top:479px">搜寻1</div>
<svg style="left:397px;top:478px" width="15" height="14" viewBox="0 0 15 14"><rect x=".6" y=".6" width="9.800" height="10.800" fill="#f4f4f4" stroke="#000" stroke-width="1.200"/><path d="M2 3h6M2 5h3M2 7h3M2 9h5" stroke="#404040" stroke-width=".8"/><circle cx="8" cy="6.500" r="2.600" fill="#f8f8f8" stroke="#606060" stroke-width=".8"/><path d="M10 9 14 13" stroke="#000" stroke-width="1.800"/></svg>
<div class="t" style="left:418px;top:479px">搜寻2</div>
<svg style="left:459px;top:479px" width="11" height="12" viewBox="0 0 11 12"><rect x=".6" y=".6" width="9.800" height="10.800" rx="1" fill="#fff" stroke="#000" stroke-width="1.200"/><path d="M3 3.500h5M3 5.500h5M3 7.500h3" stroke="#000" stroke-width=".9"/></svg>
<div class="t" style="left:477px;top:479px">剪辑历史</div>
<div style="left:25px;top:493px;width:964px;height:145px;border:1px solid;border-color:#fff #a0a0a0 #a0a0a0 #fff"></div>
<div class="sunk" style="left:28px;top:497px;width:958px;height:138px"></div>
<div class="sunk2" style="left:29px;top:498px;width:956px;height:136px;background:#fff"></div>
<div class="t" style="left:31px;top:500px">正在检查重复名称<span style="position:static;letter-spacing:2.500px">...</span></div>
<div class="t" style="left:31px;top:511.25px">正在预处理现行程序</div>
<div class="t" style="left:31px;top:522.5px">正在进行名称连接<span style="position:static;letter-spacing:2.500px">...</span></div>
<div class="t" style="left:31px;top:533.75px">正在统计需要编译的子程序</div>
<div class="t" style="left:31px;top:545px">正在编译<span style="position:static;letter-spacing:2.500px">...</span></div>
<div class="t" style="left:31px;top:556.25px">正在生成主程序入口代码</div>
<div class="t" style="left:31px;top:567.5px">程序代码编译成功</div>
<div class="t" style="left:31px;top:578.75px">正在封装易格式目的代码</div>
<div class="t" style="left:31px;top:590px">开始运行被调试程序</div>
<div class="t" style="left:31px;top:601.25px">被调试易程序运行完毕</div>
<div style="left:969px;top:499px;width:15px;height:134px;background:#f0f0f0"></div>
<svg style="left:973px;top:506px" width="7" height="4" viewBox="0 0 7 4"><path d="M0 4 3.500 0 7 4z" fill="#505050"/></svg>
<svg style="left:973px;top:621px" width="7" height="4" viewBox="0 0 7 4"><path d="M0 0h7L3.500 4z" fill="#505050"/></svg>
<div style="left:970px;top:525px;width:13px;height:90px;border:1px solid #979797;border-radius:2px;background:linear-gradient(90deg,#f7f7f7 0,#e9e9e9 45%,#d6d6d6 100%)"></div>
<div style="left:974px;top:566px;width:5px;height:7px;background:repeating-linear-gradient(180deg,#606060 0,#606060 1px,rgba(255,255,255,.8) 1px,rgba(255,255,255,.8) 2px)"></div>
<div style="left:770px;top:625px;font-size:20px;line-height:22px;height:22px;white-space:nowrap;color:#fff;opacity:.6;text-shadow:0 0 2px #808080,0 0 1px #909090;letter-spacing:.75px">jingyan.baidu.com</div>

<!-- status -->
<div style="left:8px;top:642px;width:984px;height:1px;background:#dcdcdc"></div>
<div style="left:8px;top:643px;width:984px;height:1px;background:#fff"></div>
<div class="t" style="left:9px;top:648px">数据类型为：逻辑型。本属性如果设置为真，运行时当用户在本窗口上按下回车键后，将自动将当前焦点转移到下一个组件。本属性如果设置为假，当用户在本窗口上</div>
<div style="left:832px;top:646px;width:15px;height:15px;background:#f0f0f0;border:1px solid;border-color:#fff #000 #000 #fff;box-shadow:inset -1px -1px 0 #808080"></div>
<svg style="left:836px;top:651px" width="7" height="4" viewBox="0 0 7 4"><path d="M0 4 3.500 0 7 4z" fill="#000"/></svg>
<div class="sunk" style="left:849px;top:646px;width:58px;height:15px"></div>
<div class="t" style="left:851px;top:649px;font-size:12px">X:162</div>
<div class="sunk" style="left:909px;top:646px;width:36px;height:15px"></div>
<div class="t" style="left:911px;top:649px;font-size:12px">Y:18</div>
<div class="sunk" style="left:947px;top:646px;width:28px;height:15px"></div>
<div class="t" style="left:949px;top:649px">已改</div>
<svg style="left:980px;top:649px" width="12" height="12" viewBox="0 0 12 12"><path d="M11 1 1 11M11 5 5 11M11 9 9 11" stroke="#a0a0a0" stroke-width="1.200"/><path d="M12 1 2 11M12 5 6 11M12 9 10 11" stroke="#fff" stroke-width="1"/></svg>

</body>
</html>
